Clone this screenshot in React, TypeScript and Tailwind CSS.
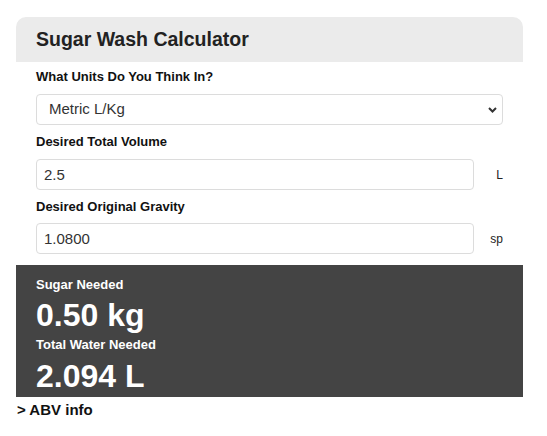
import React from "react";

export default function App() {
  return (
    <div className="min-h-[436px] bg-white pl-4 pt-[17px] font-['Liberation_Sans',Arial,sans-serif] text-[#111]">
      <div className="w-[507px]">
        <div className="h-[45px] rounded-t-[10px] bg-[#ebebeb] px-5 flex items-center">
          <h1 className="text-[19.5px] font-bold leading-none text-[#222]">Sugar Wash Calculator</h1>
        </div>
        <div className="px-5">
          <div className="mt-[7px] mb-[9px] h-4 text-[13px] font-bold leading-4">What Units Do You Think In?</div>
          <div className="relative h-[31px]">
            <select
              defaultValue="metric"
              className="h-[31px] w-full appearance-none rounded-[4px] border border-[#dcdcdc] bg-white pl-3 text-[15px] text-[#333] outline-none"
            >
              <option value="metric">Metric L/Kg</option>
              <option value="us">US Gal/Lb</option>
            </select>
            <svg
              className="pointer-events-none absolute right-[6px] top-[13px]"
              width="9"
              height="6"
              viewBox="0 0 9 6"
            >
              <path d="M1 1l3.5 3.5L8 1" fill="none" stroke="#333" strokeWidth="2" />
            </svg>
          </div>
          <div className="mt-[9px] mb-[9px] h-4 text-[13px] font-bold leading-4">Desired Total Volume</div>
          <div className="flex h-[31px] items-center">
            <input
              defaultValue="2.5"
              className="h-[31px] flex-1 rounded-[4px] border border-[#dcdcdc] pl-[7px] text-[15px] text-[#333] outline-none"
            />
            <span className="w-[29px] text-right text-[12px] text-[#222]">L</span>
          </div>
          <div className="mt-[9px] mb-[8px] h-4 text-[13px] font-bold leading-4">Desired Original Gravity</div>
          <div className="flex h-[31px] items-center">
            <input
              defaultValue="1.0800"
              className="h-[31px] flex-1 rounded-[4px] border border-[#dcdcdc] pl-[7px] text-[15px] text-[#333] outline-none"
            />
            <span className="w-[29px] text-right text-[12px] text-[#222]">sp</span>
          </div>
        </div>
        <div className="mt-[11px] bg-[#444444] px-5 pt-3 pb-1 text-white">
          <div className="h-4 text-[13px] font-bold leading-4">Sugar Needed</div>
          <div className="mt-[5px] h-[34px] text-[32px] font-bold leading-[34px]">0.50 kg</div>
          <div className="mt-[5px] h-4 text-[13px] font-bold leading-4">Total Water Needed</div>
          <div className="mt-[6px] h-[34px] text-[32px] font-bold leading-[34px]">2.094 L</div>
        </div>
        <div className="mt-1 pl-[1px] text-[15px] font-bold leading-[18px]">&gt; ABV info</div>
      </div>
    </div>
  );
}
